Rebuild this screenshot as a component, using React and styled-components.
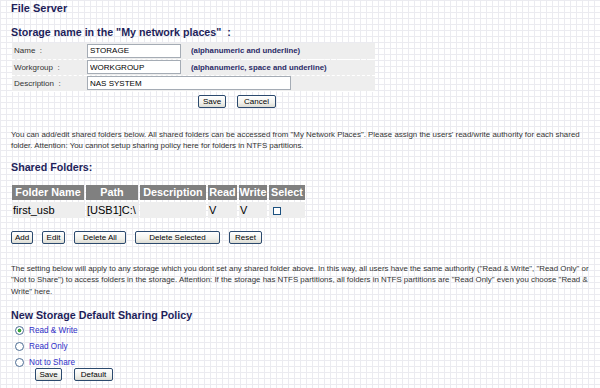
import styled, { createGlobalStyle } from "styled-components";

const GlobalStyle = createGlobalStyle`
  body {
    margin: 0;
    font-family: "Liberation Sans", Arial, sans-serif;
    background-color: #ffffff;
    background-image:
      linear-gradient(to right, #ebebf0 1px, transparent 1px),
      linear-gradient(to bottom, #ebebf0 1px, transparent 1px);
    background-size: 6px 6px;
  }
`;

function App() {
  return (
    <Page>
      <GlobalStyle />
      <Title>File Server</Title>
      <Heading $top={10}>Storage name in the "My network places" &nbsp;:</Heading>

      <FormTable>
        <colgroup>
          <col style={{ width: 75 }} />
          <col style={{ width: 104 }} />
          <col />
        </colgroup>
        <tbody>
          <FormRow>
            <LabelCell>Name &nbsp;:</LabelCell>
            <td>
              <TextInput $w={94} defaultValue="STORAGE" />
            </td>
            <HintCell>(alphanumeric and underline)</HintCell>
          </FormRow>
          <FormRow>
            <LabelCell>Workgroup &nbsp;:</LabelCell>
            <td>
              <TextInput $w={94} defaultValue="WORKGROUP" />
            </td>
            <HintCell>(alphanumeric, space and underline)</HintCell>
          </FormRow>
          <FormRow>
            <LabelCell>Description &nbsp;:</LabelCell>
            <td colSpan={2}>
              <TextInput $w={204} defaultValue="NAS SYSTEM" />
            </td>
          </FormRow>
        </tbody>
      </FormTable>

      <ButtonRow $indent={187} $top={3}>
        <Button $w={28}>Save</Button>
        <Button $w={39}>Cancel</Button>
      </ButtonRow>

      <Note $top={21}>
        You can add/edit shared folders below. All shared folders can be accessed from "My Network Places". Please
        assign the users' read/write authority for each shared folder. Attention: You cannot setup sharing policy here
        for folders in NTFS partitions.
      </Note>

      <Heading $top={8}>Shared Folders:</Heading>

      <FolderTable>
        <thead>
          <tr>
            <HeadCell $w={72}>Folder Name</HeadCell>
            <HeadCell $w={52}>Path</HeadCell>
            <HeadCell $w={66}>Description</HeadCell>
            <HeadCell $w={29}>Read</HeadCell>
            <HeadCell $w={28}>Write</HeadCell>
            <HeadCell $w={36}>Select</HeadCell>
          </tr>
        </thead>
        <tbody>
          <tr>
            <DataCell>first_usb</DataCell>
            <DataCell>[USB1]C:\</DataCell>
            <DataCell></DataCell>
            <DataCell>V</DataCell>
            <DataCell>V</DataCell>
            <DataCell>
              <Check type="checkbox" />
            </DataCell>
          </tr>
        </tbody>
      </FolderTable>

      <ButtonRow $indent={0} $top={11} $gap={9}>
        <Button $w={22}>Add</Button>
        <Button $w={23}>Edit</Button>
        <Button $w={52}>Delete All</Button>
        <Button $w={85}>Delete Selected</Button>
        <Button $w={33}>Reset</Button>
      </ButtonRow>

      <Note $top={19}>
        The setting below will apply to any storage which you dont set any shared folder above. In this way, all users
        have the same authority ("Read &amp; Write", "Read Only" or "Not to Share") to access folders in the storage.
        Attention: If the storage has NTFS partitions, all folders in NTFS partitions are "Read Only" even you choose
        "Read &amp; Write" here.
      </Note>

      <Heading $top={11}>New Storage Default Sharing Policy</Heading>

      <RadioList>
        <RadioItem>
          <Radio type="radio" name="policy" defaultChecked />
          Read &amp; Write
        </RadioItem>
        <RadioItem>
          <Radio type="radio" name="policy" />
          Read Only
        </RadioItem>
        <RadioItem>
          <Radio type="radio" name="policy" />
          Not to Share
        </RadioItem>
      </RadioList>

      <ButtonRow $indent={24} $top={0} $gap={12}>
        <Button $w={27}>Save</Button>
        <Button $w={39}>Default</Button>
      </ButtonRow>
    </Page>
  );
}

const Page = styled.div`
  width: 600px;
  height: 388px;
  overflow: hidden;
  padding: 2px 6px 0 11px;
  box-sizing: border-box;
  color: #1a1a4e;
`;

const Title = styled.div`
  font-size: 11px;
  font-weight: bold;
  color: #1e1e5a;
  line-height: 13px;
`;

const Heading = styled.div`
  margin-top: ${(p) => p.$top}px;
  font-size: 10.7px;
  font-weight: bold;
  color: #1e1e5a;
  line-height: 14px;
`;

const FormTable = styled.table`
  margin-top: 4px;
  margin-left: 1px;
  width: 363px;
  table-layout: fixed;
  border-collapse: collapse;
  font-size: 8px;
`;

const FormRow = styled.tr`
  background: #eeeeee;
  height: 16px;
  border-bottom: 1px dashed #ffffff;

  td {
    padding: 0;
    vertical-align: middle;
  }
`;

const LabelCell = styled.td`
  padding-left: 2px !important;
  color: #333333;
  font-size: 8px;
`;

const HintCell = styled.td`
  font-weight: bold;
  font-size: 7.8px;
  color: #2a2a66;
  white-space: nowrap;
  overflow: hidden;
`;

const TextInput = styled.input`
  width: ${(p) => p.$w}px;
  height: 14px;
  box-sizing: border-box;
  border: 1px solid #a5acb5;
  padding: 0 2px;
  font-family: "Liberation Sans", Arial, sans-serif;
  font-size: 8px;
  color: #000;
  background: #fff;
  display: block;
  outline: none;
`;

const ButtonRow = styled.div`
  display: flex;
  gap: ${(p) => p.$gap ?? 11}px;
  margin-top: ${(p) => p.$top}px;
  padding-left: ${(p) => p.$indent}px;
`;

const Button = styled.button`
  width: ${(p) => p.$w}px;
  height: 13px;
  padding: 0;
  box-sizing: border-box;
  border: 1px solid #2c4a6e;
  border-radius: 2px;
  background: linear-gradient(to bottom, #ffffff 0%, #f1f1ec 60%, #dcdcd4 100%);
  font-family: "Liberation Sans", Arial, sans-serif;
  font-size: 8px;
  color: #000;
  line-height: 11px;
`;

const Note = styled.p`
  margin: ${(p) => p.$top}px 0 0;
  font-size: 7.9px;
  line-height: 11.5px;
  color: #333333;
`;

const FolderTable = styled.table`
  margin-top: 9px;
  margin-left: -1px;
  border-collapse: separate;
  border-spacing: 2px 2px;
  font-size: 11px;
`;

const HeadCell = styled.th`
  width: ${(p) => p.$w}px;
  height: 15px;
  padding: 0;
  background: #808080;
  color: #ffffff;
  font-weight: bold;
  font-size: 10.8px;
  text-align: center;
  white-space: nowrap;
  line-height: 14px;
`;

const DataCell = styled.td`
  height: 16px;
  padding: 0 1px;
  background: #eeeeee;
  color: #000;
  white-space: nowrap;
  vertical-align: middle;
`;

const Check = styled.input`
  appearance: none;
  width: 8px;
  height: 8px;
  margin: 0 0 0 3px;
  border: 1px solid #1c5180;
  background: #ffffff;
  vertical-align: middle;
`;

const RadioList = styled.div`
  display: flex;
  flex-direction: column;
  gap: 4px;
  margin-top: 2px;
  padding-left: 4px;
`;

const RadioItem = styled.label`
  display: flex;
  align-items: center;
  gap: 5px;
  height: 12px;
  font-size: 8.2px;
  color: #3030c8;
`;

const Radio = styled.input`
  appearance: none;
  width: 9px;
  height: 9px;
  margin: 0;
  box-sizing: border-box;
  border: 1px solid #4d6d94;
  border-radius: 50%;
  background: #ffffff;

  &:checked {
    background: radial-gradient(circle, #3aa63a 0 1.6px, #ffffff 2.2px);
  }
`;

export default App;
